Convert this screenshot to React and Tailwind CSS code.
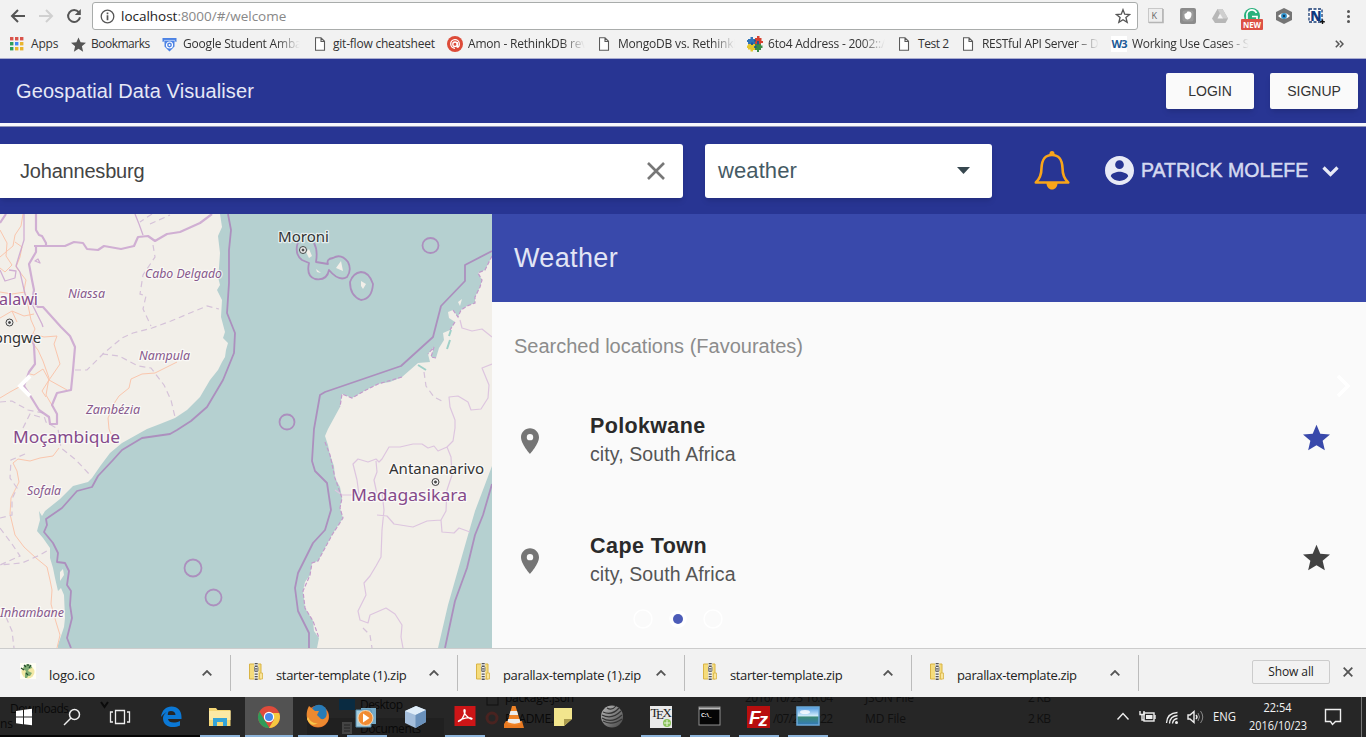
import React from "react";

const Doc = () => (
  <svg width="12" height="14" viewBox="0 0 12 14" fill="#fff" stroke="#5a5a5a" strokeWidth="1.1">
    <path d="M.5.8H6L9.5 4.3V13.2H.5ZM6 .8V4.5H9.5" />
  </svg>
);

const AppsGrid = () => (
  <svg width="14" height="14" viewBox="0 0 14 14">
    {["#d9534a", "#d9534a", "#d9534a", "#2f9e5b", "#4285f4", "#e9b52d", "#2f9e5b", "#e9b52d", "#e9b52d"].map((c, i) => (
      <rect key={i} x={(i % 3) * 5} y={Math.floor(i / 3) * 5} width="3.4" height="3.4" fill={c} />
    ))}
  </svg>
);

const Star = ({ size = 16, className = "" }) => (
  <svg width={size} height={size} viewBox="2 2 20 19" className={className}>
    <path d="M12 17.27 18.18 21l-1.64-7.03L22 9.24l-7.19-.61L12 2 9.19 8.63 2 9.24l5.46 4.73L5.82 21z" />
  </svg>
);

const Gsa = () => (
  <svg width="15" height="15" viewBox="0 0 15 15">
    <path d="M.5 1H14.5V5L12.5 4.2V9.5L7.5 14.5L2.5 9.5V4.2L.5 5Z" fill="#4c82e4" />
    <path d="M2 3.4H13" stroke="#a9c4f5" strokeWidth="1" />
    <circle cx="7.5" cy="8" r="3" fill="#4c82e4" stroke="#fff" strokeWidth="1.2" />
    <circle cx="7.5" cy="8" r="1" fill="#fff" />
  </svg>
);

const Amon = () => (
  <svg width="16" height="16" viewBox="0 0 16 16" fill="none" stroke="#fff" strokeWidth="1.3">
    <circle cx="8" cy="8" r="8" fill="#dd4b39" stroke="none" />
    <circle cx="8" cy="8.200" r="2.200" />
    <path d="M10.300 6V11.800M10.300 11.500Q12.500 10.500 12.300 7.700A4.300 4.300 0 1 0 8 12.300" />
  </svg>
);

const Puzzle = () => (
  <svg width="16" height="16" viewBox="0 0 16 16">
    <path d="M1 3H3.5V1H6V3H8V8H1V6H0V4H1Z" fill="#2e73b8" />
    <path d="M8 2H10V0H12.5V2H14.5V5H16V7H14V8H8Z" fill="#d6402f" />
    <path d="M1 8H8V14H6V15.5H3.5V13.5H1V12H0V9.5H1Z" fill="#e3c62e" />
    <path d="M8 8H14V9.5H15.5V12H14V14H12V16H10V14H8Z" fill="#3b8c47" />
    <path d="M4 6.5H6V9H4ZM10 5H12V8.6H10ZM7 3.8H9V5.4H7ZM7.2 10H9.4V12H7.2Z" fill="#25598f" />
  </svg>
);

const W3 = () => (
  <span className="flex h-4 w-4 items-center justify-center bg-white font-['Open_Sans',sans-serif] text-[11px] font-bold tracking-[-1px] text-[#1c5a96]">W3</span>
);

const bookmarks = [
  { icon: <AppsGrid />, label: "Apps", w: "w-[61px]", slot: "w-[21px]", tr: "tracking-[-0.2px]" },
  { icon: <Star size={15} className="fill-[#555]" />, label: "Bookmarks", w: "w-[91px]", slot: "w-[20px]", tr: "tracking-[-0.5px]" },
  { icon: <Gsa />, label: "Google Student Ambas", w: "w-[153px]", slot: "w-[21px]", fade: true, tr: "tracking-[-0.2px]" },
  { icon: <Doc />, label: "git-flow cheatsheet", w: "w-[132px]", slot: "w-[18px]", tr: "tracking-[-0.22px]" },
  { icon: <Amon />, label: "Amon - RethinkDB revi", w: "w-[152px]", slot: "w-[21px]", fade: true, tr: "tracking-[-0.2px]" },
  { icon: <Doc />, label: "MongoDB vs. RethinkD", w: "w-[148px]", slot: "w-[19px]", fade: true, tr: "tracking-[-0.2px]" },
  { icon: <Puzzle />, label: "6to4 Address - 2002::/", w: "w-[152px]", slot: "w-[21px]", fade: true, tr: "tracking-[-0.22px]" },
  { icon: <Doc />, label: "Test 2", w: "w-[64px]", slot: "w-[19px]", tr: "tracking-[-0.45px]" },
  { icon: <Doc />, label: "RESTful API Server – D", w: "w-[148px]", slot: "w-[19px]", fade: true, tr: "tracking-[-0.3px]" },
  { icon: <W3 />, label: "Working Use Cases - S", w: "w-[150px]", slot: "w-[21px]", fade: true, tr: "tracking-[-0.28px]" },
];

function Browser() {
  return (
    <div className="h-[58px] shrink-0 bg-[#f2f2f2] font-['Open_Sans',sans-serif]">
      <div className="flex h-8 items-center">
        <svg width="92" height="32" viewBox="0 0 92 32" fill="none" stroke="#555" strokeWidth="2">
          <path d="M25 16H12M18 10L12 16L18 22" />
          <path d="M39 16H52M46 10L52 16L46 22" stroke="#d0d0d0" />
          <path d="M78.8 12.2A6 6 0 1 0 80 17.2" />
          <path d="M80.8 9V15H74.8Z" fill="#555" stroke="none" />
        </svg>
        <div className="flex h-[28px] w-[1046px] items-center rounded-[3px] border border-[#a9acab] bg-white pl-[7px] pr-[6px]">
          <svg width="15" height="15" viewBox="0 0 15 15" fill="none" stroke="#555" strokeWidth="1.3">
            <circle cx="7.5" cy="7.5" r="6.3" />
            <path d="M7.5 6.3V11.2M7.5 3.6V5.2" strokeWidth="1.7" />
          </svg>
          <span className="ml-[6px] text-[13.5px] tracking-[-0.02px] text-[#888]"><span className="text-[#222]">localhost</span>:8000/#/welcome</span>
          <svg width="16" height="16" viewBox="0 0 24 24" fill="none" stroke="#555" strokeWidth="2" className="ml-auto">
            <path d="M12 2.5 14.6 9.2 22 9.7 16.4 14.3 18.2 21.4 12 17.5 5.8 21.4 7.6 14.3 2 9.7 9.4 9.2Z" />
          </svg>
        </div>
        <svg width="228" height="32" viewBox="1138 0 228 32">
          <rect x="1148.500" y="8.500" width="14" height="14" fill="#eee" stroke="#c8c8c8" />
          <path d="M1149 22.500H1163V9" stroke="#b5b5b5" strokeWidth="1.600" fill="none" />
          <text x="1151.500" y="18.500" fontSize="9" fill="#666" fontFamily="Open Sans">K</text>
          <rect x="1180" y="8" width="16" height="16" rx="2" fill="#8b8b8b" />
          <rect x="1182.500" y="10.500" width="11" height="11" rx="2" fill="#9b9b9b" />
          <path d="M1184.500 14Q1187 13 1187.500 11.500Q1192 11 1191.500 15Q1191 19 1187.500 19.500Q1184 19 1184.500 14Z" fill="#fff" />
          <path d="M1217.500 9H1222.500L1228 18.500L1225.500 23H1215L1212 18.500Z" fill="#b7b7b7" />
          <path d="M1217.500 9L1222.500 18.500H1228L1222.500 9Z" fill="#cfcfcf" />
          <path d="M1220 13.500L1223 18.500H1217.500Z" fill="#f2f2f2" />
          <circle cx="1252" cy="16" r="8" fill="#27b07b" />
          <path d="M1256.500 13A5 5 0 0 0 1247 16V20M1252 16.500H1257V19" stroke="#fff" strokeWidth="1.700" fill="none" />
          <rect x="1241" y="19" width="22" height="11" rx="1" fill="#dd5145" />
          <text x="1243" y="27.800" fontSize="8" fontWeight="700" fill="#fff" fontFamily="Open Sans" textLength="18" lengthAdjust="spacingAndGlyphs">NEW</text>
          <path d="M1284 8L1292 12V20L1284 24L1276 20V12Z" fill="#757575" />
          <path d="M1278 16Q1284 10 1290 16Q1284 22 1278 16Z" fill="#fff" />
          <circle cx="1284" cy="16" r="2.900" fill="#2c8fc9" />
          <circle cx="1284" cy="16" r="1.200" fill="#153c60" />
          <rect x="1309" y="9" width="13" height="13" fill="#fff" stroke="#173a73" strokeWidth="1.300" strokeDasharray="3 1.500" />
          <text x="1310.300" y="20.500" fontSize="13.500" fontWeight="800" fill="#103a80" fontFamily="Open Sans">N</text>
          <path d="M1322.500 19.500V24M1320.200 21.700H1324.800" stroke="#111" strokeWidth="1.400" />
          <g fill="#555"><circle cx="1348.500" cy="11.500" r="1.500" /><circle cx="1348.500" cy="16.500" r="1.500" /><circle cx="1348.500" cy="21.500" r="1.500" /></g>
        </svg>
      </div>
      <div className="flex h-6 items-center pl-[10px] text-[12px] text-[#333]">
        {bookmarks.map((b) => (
          <div key={b.label} className={"flex shrink-0 items-center " + b.w}>
            <span className={"flex shrink-0 items-center " + b.slot}>{b.icon}</span>
            <span className={"whitespace-nowrap leading-5 " + b.tr + (b.fade ? " w-[117px] [mask-image:linear-gradient(to_right,black_80%,transparent)]" : "")}>{b.label}</span>
          </div>
        ))}
        <svg width="9" height="8" viewBox="0 0 9 8" fill="none" stroke="#555" strokeWidth="1.500" className="ml-auto mr-[22px]">
          <path d="M.8 .8L4 4L.8 7.200M4.800 .8L8 4L4.800 7.200" />
        </svg>
      </div>
    </div>
  );
}

const HALO = { stroke: "#fff", strokeWidth: 2.5, strokeOpacity: 0.65, paintOrder: "stroke", strokeLinejoin: "round", lengthAdjust: "spacingAndGlyphs" };

function Label({ x, y, w, children }) {
  return <text x={x} y={y} textLength={w} lengthAdjust="spacingAndGlyphs">{children}</text>;
}

function MapView() {
  const { lengthAdjust, ...halo } = HALO;
  return (
    <svg width="492" height="434" viewBox="0 214 492 434" className="block shrink-0" fontFamily="'Noto Sans', sans-serif">
      <rect y="214" width="492" height="434" fill="#b5d0d0" />
      <g fill="#f2efe9">
        <path d="M0 214H220L222 227L218 236L220 253L219 268L218 277L220 285L217 290L222 300L221 317L225 332L223 338L228 343L226 350L225 357L222 362L218 370L210 380L200 397L187 410L175 418L160 424L147 429L122 443L110 453L101 465L92 478L88 482L73 486L60 499L45 511L42 516L39 511L40 520L37 531L43 538L50 548L50 558L53 568L55 578L58 591L61 588L64 595L65 618L64 627L58 645V648H0Z" />
        <path d="M492 256L485 270L478 273L482 280L480 287L475 297L475 303L467 306L461 310L458 317L453 310L448 312L449 318L455 322L450 330L443 333L444 340L439 348L436 358L431 357L434 347L428 354L430 362L418 363L402 377L390 382L378 384L366 390L352 398L342 394L340 407L328 429L325 436L328 445L330 455L334 466L335 478L340 487L342 498L340 508L343 518L337 527L332 535L326 546L318 561L312 563L310 575L305 582L303 591L305 608L313 621L314 631L319 638L317 648H438L448 605L468 535L475 511L492 466Z" />
        <path d="M306 252L309 249L312 256L309 258ZM316 269L321 273L317 272ZM336 268L341 261L343 271ZM361 281L366 284L363 289L361 286ZM458 302L462 299L460 306ZM60 572L63 569L64 575L60 581Z" />
      </g>
      <g fill="none" stroke="#fac6ad" strokeWidth="1">
        <path d="M23 214L21 226L15 235L13 246L0 257M0 230L7 243L6 256L12 265L5 272L0 268M15 242L22 247L20 257L16 267L26 280L24 290L27 300L31 320L35 329L30 340L38 350L43 361L49 378L46 395L53 407M0 292L12 294L25 292M0 318L12 311L24 316L34 314M12 311L17 322M57 336L44 337L34 334M57 336L54 344L60 364L49 380L67 390M49 380L43 369L34 375L30 374M49 380L42 391L46 397M0 398L10 392L21 386" />
        <path d="M177 362L155 373L142 374L131 379L129 388L119 396L115 402L108 418L109 429L111 434M59 448L53 456L40 458L30 461L18 459L13 463L17 471L19 482L11 498L10 514L15 535L24 547L36 558L47 567L50 580L52 590L51 604L56 622L60 635L57 648" />
      </g>
      <g fill="none" stroke="#d5c2d9" strokeWidth="1.200" strokeDasharray="6 4">
        <path d="M153 245L155 257L143 275L140 294L146 296L143 309L151 326M75 370L87 370L104 353L122 338L133 333L152 328L171 321L190 313L207 306L219 309M102 354L119 356L138 366L151 368L164 385L171 400L175 417M152 214L140 222M150 224L170 215M0 402L12 401L28 410L43 413L46 422L58 429L61 448L76 460L90 475M23 428L30 414L40 417M25 454L11 460L10 478L17 488L12 499L12 515L0 518M0 528L12 544L20 556L0 565L22 563L40 555L50 549M6 617L12 631L14 648M424 372L426 386L434 397L444 402M363 628L370 635L372 648" />
      </g>
      <g fill="none" stroke="#cba4d0" strokeWidth="2.200" opacity=".85" strokeLinejoin="round">
        <path d="M0 223L6 214M36 214L36 230L39 235L42 236L46 243V246M34 246H65L74 242L83 243L87 249L98 250L104 246L121 249L134 246L138 237L148 236L155 241L167 234L180 232L200 223L212 214M36 246L36 252L29 264L32 280L34 290L32 302L38 307H43L61 327L70 336L75 347L73 370L71 390L57 393L52 405L57 414L57 424L50 424L49 417L39 410L31 397L28 392L24 386L29 372L35 364L34 346L32 334" />
        <path d="M135 214L139 224L143 235M24 214L24 240L19 256L16 266L20 272L25 294L33 306L42 324L43 327M0 270L5 281L15 278L16 271L9 270M35 261L40 263L38 259Z" strokeWidth="1.300" />
      </g>
      <g fill="none" stroke="#ddc5df" strokeWidth="1.200" strokeLinejoin="round">
        <path d="M460 320L462 328L472 331L482 329L492 337M492 364L482 368L489 385L488 398L481 409L471 410L468 402L458 396L449 397L450 407L455 420L455 428L453 441L447 447L438 451L434 446L428 448L422 444L413 444L400 447L389 447L382 459L379 462L376 459L368 462L358 459L353 464L357 480L359 495M335 490L342 495H354M376 461L377 472L374 480L377 494M447 447L451 457L452 475L447 490L446 511L441 520L442 532L454 533L459 528L470 532M377 515L387 516L394 524L413 527L427 521L441 520M382 492L384 510L382 530L381 557L376 566L370 576L364 583L366 595L358 611L360 620L368 623L370 615L386 608L395 614L402 625L401 637L403 648" />
      </g>
      <g fill="none" stroke="#ac8fbe" strokeWidth="1.800" strokeLinejoin="round">
        <path d="M228 214L231 230L229 250V283L227 313L235 333L234 353L223 380L207 407L191 421L177 430L170 434L142 438L122 450L113 460L98 476L92 487L77 491L62 508L46 519L47 525L44 532L53 543L58 553L57 562L65 563L69 571L67 585L71 591L70 605L72 618L67 638L71 648" />
        <path d="M492 251L465 265V281L441 306L433 337L401 366L325 392L320 395L314 429L312 461L315 471L327 483L331 510L325 530L313 543L298 573L295 588L298 611L309 633V648M492 484L483 515L475 535L467 568L455 601L445 648" />
        <path d="M298 242Q294 254 302 260L309 263Q306 276 315 279Q327 281 329 270Q339 282 347 277Q352 270 348 262Q341 253 333 258Q326 259 328 264L316 262Q318 250 314 243" />
        <path d="M361 272Q369 272 373 284Q372 299 361 300Q350 296 350 282Q353 273 361 272Z" />
        <ellipse cx="430.500" cy="245.500" rx="8" ry="7.500" /><circle cx="287" cy="422" r="7.500" /><circle cx="193" cy="568" r="8.500" /><circle cx="213.500" cy="597.500" r="8" />
      </g>
      <g fill="none" stroke="#c49acb" strokeWidth="1.200" strokeDasharray="4 2">
        <path d="M492 256L485 270L478 273L482 280L480 287L475 297L475 303L467 306L461 310L458 317L453 310M455 322L450 330M436 358L431 357L434 347L428 354M402 377L378 384L366 390L352 398L342 394L340 407M325 442L330 455L335 478L342 498L340 508L343 518L332 535L318 561L312 563L310 575L303 591L305 608L313 621L319 638" />
      </g>
      <g fill="none" stroke="#9fd0c8" strokeWidth="2"><path d="M451 330L449 336M450 340L447 349M418 365L426 370" /></g>
      <g fill="#87588c" fontStyle="italic" fontSize="12.500" {...halo}>
        <Label x="145" y="278" w="77">Cabo Delgado</Label>
        <Label x="68" y="298" w="37">Niassa</Label>
        <Label x="139" y="360" w="51">Nampula</Label>
        <Label x="86" y="414" w="54">Zambézia</Label>
        <Label x="27" y="495" w="34">Sofala</Label>
        <Label x="0" y="617" w="64">Inhambane</Label>
      </g>
      <g fill="#854a8b" fontSize="16" {...halo}>
        <Label x="-1" y="305" w="39">alawi</Label>
        <Label x="13" y="443" w="107">Moçambique</Label>
        <Label x="351" y="501" w="116">Madagasikara</Label>
      </g>
      <g fill="#333" fontSize="14.500" {...halo}>
        <Label x="-6" y="343" w="47">ongwe</Label>
        <Label x="278" y="242" w="51">Moroni</Label>
        <Label x="389" y="474" w="95">Antananarivo</Label>
      </g>
      {[[9.5, 322.5], [303, 250], [435.5, 482]].map(([x, y]) => (
        <g key={x} fill="none" stroke="#444"><circle cx={x} cy={y} r="3.500" fill="#eee" /><circle cx={x} cy={y} r="1" fill="#444" /></g>
      ))}
      <path d="M30 376L20 386L30 396" fill="none" stroke="#fff" strokeWidth="4" />
    </svg>
  );
}

function Place({ name, starClass, nameClass }) {
  return (
    <div className="flex h-[120px] items-center pl-[29px] pr-9">
      <svg width="18" height="26" viewBox="5 2 14 20" className="mt-0.5 fill-[#757575]">
        <path d="M12 2C8.130 2 5 5.130 5 9c0 5.250 7 13 7 13s7-7.750 7-13c0-3.870-3.130-7-7-7zm0 9.500a2.500 2.500 0 1 1 0-5 2.500 2.500 0 0 1 0 5z" />
      </svg>
      <div className="ml-[51px] leading-7">
        <div className={"text-[21.5px] font-bold text-[#2a2a2a] " + nameClass}>{name}</div>
        <div className="text-[19.5px] tracking-[0.1px] text-[#555]">city, South Africa</div>
      </div>
      <Star size={27} className={"ml-auto -mt-[6px] " + starClass} />
    </div>
  );
}

function Chevron({ className = "" }) {
  return (
    <svg width="10" height="6" viewBox="0 0 10 6" fill="none" stroke="#555" strokeWidth="1.800" className={className}>
      <path d="M.7 5.300L5 1L9.300 5.300" />
    </svg>
  );
}

const Zip = () => (
  <svg width="14" height="17" viewBox="0 0 14 17">
    <path d="M.5 1H12V16H.5Z" fill="#f5dc7c" stroke="#d9b445" />
    <path d="M10.500 10H13.500V16H10.500Z" fill="#f9e59b" stroke="#d9b445" strokeWidth=".8" />
    <path d="M7.200 0V17" stroke="#eee" strokeWidth="4" />
    <path d="M7.200 0V17" stroke="#555" strokeWidth="3" strokeDasharray="1.300 1.300" />
    <path d="M5.500 4V8H9V4" fill="none" stroke="#888" />
  </svg>
);

const Dino = () => (
  <svg width="16" height="16" viewBox="0 0 16 16">
    <rect width="16" height="16" fill="#fffef5" />
    <circle cx="8" cy="9" r="6.500" fill="#f2e8a4" />
    <path d="M4 3L7 1L11 2L12 5L9 6L8 8L10 9L12 10L10 13H8L7 15H5L5 11L6 8L3 6Z" fill="#7dab72" />
    <path d="M4 2L6 4M8 1V3M11 2L9 5M1 5L4 7M6 10L8 12" stroke="#244a2b" strokeWidth="1.200" />
  </svg>
);

const downloads = [
  { name: "logo.ico", w: "w-[231px] pl-[20px]", icon: <Dino />, tr: "ml-[13px] tracking-[-0.1px]" },
  { name: "starter-template (1).zip", w: "w-[227px] pl-[18px]", icon: <Zip />, tr: "ml-[11px] tracking-[-0.33px]" },
  { name: "parallax-template (1).zip", w: "w-[227px] pl-[18px]", icon: <Zip />, tr: "ml-[11px] tracking-[-0.33px]" },
  { name: "starter-template.zip", w: "w-[227px] pl-[18px]", icon: <Zip />, tr: "ml-[11px] tracking-[-0.38px]" },
  { name: "parallax-template.zip", w: "w-[227px] pl-[18px]", icon: <Zip />, tr: "ml-[11px] tracking-[-0.38px]" },
];

function Downloads() {
  return (
    <div className="flex h-[49px] shrink-0 border-t border-[#ccc] bg-[#f2f2f2] font-['Open_Sans',sans-serif] text-[#222]">
      {downloads.map((d) => (
        <div key={d.name} className={"mt-[6px] flex h-9 shrink-0 items-center border-r border-[#bcbcbc] pr-[18px] " + d.w}>
          <span className="mb-1 flex w-[16px] shrink-0">{d.icon}</span>
          <span className={"mt-[5px] whitespace-nowrap text-[13px] " + d.tr}>{d.name}</span>
          <Chevron className="ml-auto" />
        </div>
      ))}
      <div className="ml-auto mr-[13px] flex h-[46px] items-center">
        <div className="flex h-6 w-[78px] items-center justify-center rounded-[2px] border border-[#ccc] text-[12px] tracking-[-0.1px]">Show all</div>
        <svg width="10" height="10" viewBox="0 0 10 10" stroke="#555" strokeWidth="1.800" className="ml-[13px]"><path d="M.7 .7L9.300 9.300M9.300 .7L.7 9.300" /></svg>
      </div>
    </div>
  );
}

function Taskbar() {
  return (
    <svg width="1366" height="40" viewBox="0 697 1366 40" className="block shrink-0" fontFamily="'Open Sans', sans-serif">
      <defs>
        <linearGradient id="ball" x2="1" y2="1"><stop stopColor="#bbb" /><stop offset="1" stopColor="#444" /></linearGradient>
        <linearGradient id="sky" x2="0" y2="1"><stop stopColor="#4a96dd" /><stop offset=".5" stopColor="#d5eefb" /><stop offset=".55" stopColor="#3d8b75" /><stop offset="1" stopColor="#3379ba" /></linearGradient>
      </defs>
      <rect y="697" width="1366" height="40" fill="#262626" />
      <path d="M0 736H230" stroke="#050505" strokeWidth="2" />
      <g fill="#090909" fontSize="12">
        <text x="10" y="713" textLength="59">Downloads</text><text x="0" y="728">ns</text>
        <path d="M101 702L104.500 707L108 702" fill="none" stroke="#0b0b0b" strokeWidth="2" />
        <rect x="307" y="718" width="137" height="19" fill="#202020" />
        <text x="360" y="709" textLength="43">Desktop</text><text x="360" y="733" textLength="61">Documents</text>
        <rect x="339" y="699" width="16" height="11" fill="#0a2b41" />
        <path d="M342 722H352V734H342Z" fill="#444" /><path d="M344 725H350M344 728H350M344 731H350" stroke="#222" />
        <text x="505" y="702" textLength="69">package.json</text><text x="505" y="723" textLength="49">README.</text>
        <rect x="487" y="695" width="11" height="10" fill="none" stroke="#111" />
        <g fill="#101010"><text x="745" y="702" textLength="88">2016/10/23 16:04</text><text x="773" y="723" textLength="60">/07/23 23:22</text><text x="865" y="702" textLength="49">JSON File</text><text x="865" y="723" textLength="41">MD File</text><text x="1028" y="702" textLength="23">2 KB</text><text x="1028" y="723" textLength="23">2 KB</text></g>
      </g>
      <rect x="245" y="697" width="48" height="40" fill="#525252" />
      <g fill="#8db4da"><rect x="200" y="735" width="40" height="2" /><rect x="245" y="735" width="48" height="2" /><rect x="298" y="735" width="40" height="2" /><rect x="347" y="735" width="40" height="2" /><rect x="445" y="735" width="40" height="2" /><rect x="641" y="735" width="40" height="2" /><rect x="690" y="735" width="40" height="2" /><rect x="739" y="735" width="40" height="2" /><rect x="788" y="735" width="40" height="2" /></g>
      <path d="M16 711L23 710V716.500H16ZM24 709.800L32 708.700V716.500H24ZM16 717.500H23V724.200L16 723.200ZM24 717.500H32V725.300L24 724.200Z" fill="#fff" />
      <g fill="none" stroke="#eee" strokeWidth="1.500"><circle cx="74.500" cy="714.500" r="5" /><path d="M71 718L64 725" /><path d="M115.500 710.500H124.500V723.500H115.500ZM113 712H110.500V722H113M127 712H129.500V722H127" strokeWidth="1.300" /></g>
      <path d="M161 717C162 710 166 706.500 171.500 706.500C178 706.500 181.500 711 181.500 717V719H168C168.500 722.500 174 724 180 721V725.500C171 729.500 163 725.500 163 718.500C163 715 165.500 712.500 169 711C168 712.500 167.800 713.500 167.800 715H175.500C175.500 709 166 709.500 161 717Z" fill="#0b78d5" />
      <path d="M209 708H216L217.500 710H230.500V726H209Z" fill="#f5d776" /><path d="M209 711H230.500V720H209Z" fill="#fce9a5" /><path d="M213 726V718H227V726H223V722H217V726Z" fill="#35a4d8" />
      <circle cx="269" cy="717" r="11" fill="#de4b3b" />
      <path d="M259.500 711.500L264.300 719.700L269.500 728A11 11 0 0 1 259.500 711.500Z" fill="#2f9c59" /><path d="M279.200 713A11 11 0 0 1 269 728L274 719.500L272 713Z" fill="#f5c840" />
      <circle cx="269" cy="717" r="5.200" fill="#fff" /><circle cx="269" cy="717" r="4" fill="#4689ec" />
      <circle cx="318" cy="716.500" r="11" fill="#df6325" /><circle cx="319" cy="713" r="8.200" fill="#277bb7" />
      <path d="M309 706L315 711L319 711L317 715L321 719C326 720 328 715 326 710C331 715 329 727 318 727C307 727 304 715 309 706Z" fill="#ed8930" /><path d="M308 717Q311 724 318 723Q311 728 307 719Z" fill="#f8c64a" />
      <path d="M361 708H376V724H361Z" fill="#76aac7" /><path d="M356 710H371V727H356Z" fill="#a7cfdf" stroke="#568dad" /><circle cx="365.500" cy="718" r="7.500" fill="#f18b32" stroke="#f4d6b3" /><path d="M363 713.500L369.500 718L363 722.500Z" fill="#fff" />
      <path d="M405 711L416 706L426 710V722L415.500 728L405 723Z" fill="#a4bedb" /><path d="M405 711L416 706L426 710L415.500 715Z" fill="#e0edf8" /><path d="M415.500 715L426 710V722L415.500 728Z" fill="#6a91bb" />
      <rect x="454.500" y="706" width="21" height="20" fill="#cd1517" /><path d="M458.500 721.500Q463 720 465 712Q465.500 709 464 710Q463.500 714 469 718Q472 720 472 718.500Q469 716.500 461 719.500Q458 721 458.500 721.500Z" fill="none" stroke="#fff" strokeWidth="1.300" />
      <circle cx="492" cy="718" r="5" fill="none" stroke="#492320" strokeWidth="3" />
      <path d="M504 724L506 721H522L524 728H504Z" fill="#e87921" /><path d="M512 706H515.500L521 724Q514 727 507 724Z" fill="#f18427" /><path d="M510.500 711H517L518.200 715H509.300ZM508.200 719H519.500L520.500 722.500Q514 725 507.500 722Z" fill="#ededed" />
      <path d="M554 708H572V719L564 726H554Z" fill="#f2e58d" /><path d="M572 719L564 726V719Z" fill="#aa9b4d" />
      <circle cx="612" cy="716.500" r="11" fill="url(#ball)" /><g stroke="#343434" fill="none" strokeWidth="1.200"><path d="M603 712Q612 716 619 708M602 715Q612 720 621 711M602 718Q612 724 622 715M603 721Q612 726 622 719M607 708Q612 711 616 706" /></g>
      <rect x="650" y="706" width="22" height="22" fill="#e9e9e9" /><text y="717" fontFamily="Liberation Serif" fontSize="13" fill="#222" x="650.500 656 662.500" dy="0 2 -2">TEX</text>
      <circle cx="667" cy="723" r="4" fill="#8ac45b" /><path d="M664 723H670M667 720V726" stroke="#eaf5df" />
      <rect x="699" y="707" width="21" height="18" fill="#050505" stroke="#909090" /><path d="M699 708.500H720" stroke="#bbb" strokeWidth="2" /><text x="701" y="717" fontSize="6" fontWeight="700" fill="#eee">C:\_</text>
      <rect x="747" y="706" width="23" height="22" fill="#b80e0e" /><text x="749 758.500" y="724" dy="0 2" fontFamily="Liberation Sans" fontStyle="italic" fontWeight="700" fontSize="19" fill="#fff">Fz</text>
      <rect x="797" y="707" width="22" height="18" fill="url(#sky)" stroke="#6ba9d8" strokeWidth="1.500" /><ellipse cx="805" cy="712" rx="5" ry="2" fill="#fff" opacity=".8" />
      <g fill="none" stroke="#eee" strokeWidth="1.400">
        <path d="M1117.500 719.500L1123 713.500L1128.500 719.500" /><rect x="1144" y="713" width="10" height="8" /><path d="M1155 715V719" /><path d="M1140 711V714.500H1144V711M1142 714V720H1144" />
        <path d="M1166.500 723Q1167 713 1177.500 712.500M1169.500 723.500Q1170 716 1177.500 715.500M1172.500 723.500Q1173 719 1177.500 718.500" strokeWidth="1.300" />
        <path d="M1188 715H1190L1194 711.500V722.500L1190 719H1188Z" /><path d="M1196 715Q1198 717 1196 719" /><path d="M1198 713Q1201 717 1198 721M1200.500 711Q1205 717 1200.500 723" stroke="#888" strokeWidth="1" />
        <path d="M1325.500 709.500H1340.500V721.500H1335.500L1332.500 724.500L1330.500 721.500H1325.500Z" />
      </g>
      <rect x="1146" y="715" width="6.500" height="4" fill="#eee" /><circle cx="1176.500" cy="722.500" r="1.500" fill="#eee" />
      <g fill="#f3f3f3" fontSize="12.500">
        <Label x="1213" y="721" w="23">ENG</Label><Label x="1263.500" y="712" w="28">22:54</Label><Label x="1249" y="730" w="58">2016/10/23</Label>
      </g>
      <path d="M1361.500 697V737" stroke="#777" />
    </svg>
  );
}

export default function App() {
  return (
    <div className="flex h-[739px] w-[1366px] flex-col overflow-hidden bg-white font-['Liberation_Sans',sans-serif]">
      <Browser />
      <header className="flex h-[65px] shrink-0 items-center border-t border-[#a9acd0] bg-[#283593] pl-4 pr-2">
        <h1 className="text-[20px] tracking-[0.1px] text-[#e6e8f6]">Geospatial Data Visualiser</h1>
        <div className="ml-auto flex gap-4 text-[14px] text-[#333]">
          <button className="h-9 w-[88px] rounded-[2px] bg-[#fafafa] shadow-md">LOGIN</button>
          <button className="h-9 w-[88px] rounded-[2px] bg-[#fafafa] shadow-md">SIGNUP</button>
        </div>
      </header>
      <div className="h-[4px] shrink-0 border-b border-[#8f94b8] bg-[#f8f8fc]" />
      <nav className="flex h-[87px] shrink-0 items-center bg-[#283593]">
        <div className="flex h-[54px] w-[683px] items-center rounded-r-[3px] bg-white pl-[20px] pr-[18px] text-[20px] tracking-[-0.2px] text-[#444] shadow-md">
          Johannesburg
          <svg width="18" height="18" viewBox="0 0 18 18" stroke="#777" strokeWidth="2.600" className="ml-auto"><path d="M1 1L17 17M17 1L1 17" /></svg>
        </div>
        <div className="ml-[22px] flex h-[54px] w-[287px] items-center rounded-[3px] bg-white pl-[13px] pr-[22px] text-[22px] tracking-[0.1px] text-[#455a64] shadow-md">
          weather
          <svg width="13" height="7" viewBox="0 0 13 7" className="ml-auto fill-[#37474f]"><path d="M0 0H13L6.500 7Z" /></svg>
        </div>
        <svg width="36" height="39" viewBox="0 0 36 39" fill="none" stroke="#f9a51a" strokeWidth="2.600" className="ml-[42px]">
          <path d="M1.800 31.500C5 28.500 7.500 24 7.500 17C8 8 11 4 18 4C25 4 28 8 28.500 17C28.500 24 31 28.500 34.200 31.500Z" strokeLinejoin="round" />
          <path d="M12.500 32C12.500 36 15 38.500 18 38.500C21 38.500 23.500 36 23.500 32Z" fill="#f9a51a" stroke="none" />
          <circle cx="18" cy="2.500" r="2.500" fill="#f9a51a" stroke="none" />
        </svg>
        <svg width="29" height="29" viewBox="2 2 20 20" className="ml-[35px] fill-[#e8eaf6]">
          <path d="M12 2C6.480 2 2 6.480 2 12s4.480 10 10 10 10-4.480 10-10S17.520 2 12 2zm0 3c1.660 0 3 1.340 3 3s-1.340 3-3 3-3-1.340-3-3 1.340-3 3-3zm0 14.200c-2.500 0-4.710-1.280-6-3.220.03-1.990 4-3.080 6-3.080 1.990 0 5.970 1.090 6 3.080-1.290 1.940-3.500 3.220-6 3.220z" />
        </svg>
        <span className="ml-[7px] mt-px w-[168px] whitespace-nowrap text-[19.5px] text-[#d5d9f0] [-webkit-text-stroke:0.5px_#d5d9f0]">PATRICK MOLEFE</span>
        <svg width="17" height="11" viewBox="0 0 17 11" fill="none" stroke="#e8eaf6" strokeWidth="3.200" className="ml-[13px] mt-0.5"><path d="M1.500 1.500L8.500 8.500L15.500 1.500" /></svg>
      </nav>
      <main className="flex h-[434px] shrink-0">
        <MapView />
        <section className="relative flex-1 bg-[#fafafa]">
          <div className="flex h-[88px] items-center bg-[#3949ab] pl-[22px] text-[27px] tracking-[0.35px] text-[#e2e5f5]">Weather</div>
          <div className="flex h-[78px] items-center pl-[22px] pt-[10px] text-[20px] text-[#8c8c8c]">Searched locations (Favourates)</div>
          <Place name="Polokwane" starClass="fill-[#3949ab]" nameClass="tracking-[0.35px]" />
          <Place name="Cape Town" starClass="fill-[#424242]" nameClass="tracking-[0.45px]" />
          <svg width="14" height="24" viewBox="0 0 14 24" fill="none" stroke="#fff" strokeWidth="3.500" className="absolute right-[16px] top-[160px]"><path d="M2 2L12 12L2 22" /></svg>
          <svg width="92" height="20" viewBox="0 0 92 20" fill="none" stroke="#fff" strokeWidth="1.500" className="absolute left-[140px] top-[395px]">
            <circle cx="11" cy="10" r="9" /><circle cx="46" cy="10" r="8" fill="#fff" /><circle cx="46" cy="10" r="5" fill="#4c5cb8" stroke="none" /><circle cx="81" cy="10" r="9" />
          </svg>
        </section>
      </main>
      <Downloads />
      <Taskbar />
    </div>
  );
}
